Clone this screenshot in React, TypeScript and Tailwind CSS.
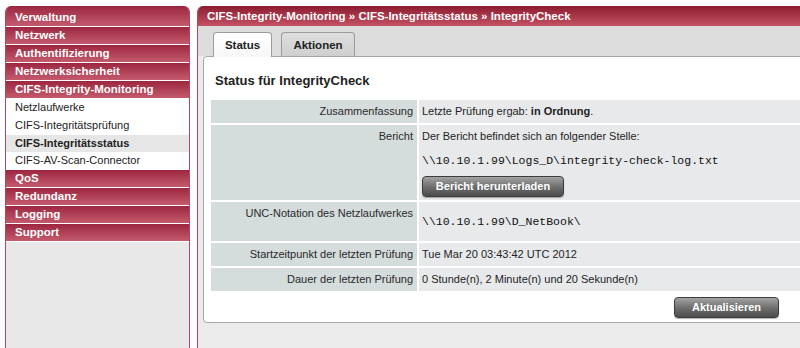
const topItems = ['Verwaltung', 'Netzwerk', 'Authentifizierung', 'Netzwerksicherheit', 'CIFS-Integrity-Monitoring'];
const subItems = ['Netzlaufwerke', 'CIFS-Integritätsprüfung', 'CIFS-Integritätsstatus', 'CIFS-AV-Scan-Connector'];
const bottomItems = ['QoS', 'Redundanz', 'Logging', 'Support'];

function NavBar({ label, first }: { label: string; first?: boolean }) {
  return (
    <div
      className={`${first ? 'h-[21px] pt-[3px]' : 'h-[18px]'} border-b border-white bg-linear-to-b from-[#9c2540] to-[#c45a6e] pl-[9px] text-[11.5px] leading-[17px] font-bold text-white`}
    >
      {label}
    </div>
  );
}

function Sidebar() {
  return (
    <div className="flex h-[400px] w-[185px] shrink-0 flex-col overflow-hidden rounded-t-[6px] border-x border-[#b5485c] bg-[#e8e8e8]">
      {topItems.map((item, i) => (
        <NavBar key={item} label={item} first={i === 0} />
      ))}
      <div className="bg-white">
        {subItems.map((item) => (
          <div
            key={item}
            className={`h-[17.75px] pl-[9px] text-[11px] leading-[17.75px] text-[#222] ${
              item === 'CIFS-Integritätsstatus' ? 'bg-[#e6e6e6] font-bold' : ''
            }`}
          >
            {item}
          </div>
        ))}
      </div>
      {bottomItems.map((item) => (
        <NavBar key={item} label={item} />
      ))}
    </div>
  );
}

function GrayButton({ label, width }: { label: string; width: string }) {
  return (
    <button
      className={`${width} h-[21px] rounded-[4px] border border-[#3c3c3c] bg-linear-to-b from-[#a4a4a4] via-[#707070] to-[#4c4c4c] text-[11px] font-bold text-white shadow-[0_1px_1px_rgba(0,0,0,0.3)]`}
    >
      {label}
    </button>
  );
}

function Row({ label, children, tall }: { label: string; children: React.ReactNode; tall?: boolean }) {
  return (
    <>
      <div className="bg-[#d5dcdc] px-[4px] py-[4px] text-right leading-[15px] text-[#2a2a2a]">{label}</div>
      <div className={`bg-[#e7e9eb] px-[3px] py-[4px] leading-[15px] text-[#1e1e1e] ${tall ? 'flex items-center' : ''}`}>
        {children}
      </div>
    </>
  );
}

const mono = "font-['Liberation_Mono','Courier_New',monospace] text-[11.5px] text-[#111]";

export default function App() {
  return (
    <div className="h-[348px] w-[800px] overflow-hidden bg-white font-['Liberation_Sans',Arial,sans-serif]">
      <div className="flex h-full w-[820px] pt-[6px] pl-[5px]">
        <Sidebar />
        <div className="ml-[7px] flex flex-1 flex-col overflow-hidden rounded-t-[6px] border-x border-[#b5485c] bg-[#ebebeb]">
          <div className="h-[20px] bg-linear-to-b from-[#8c1b30] to-[#c45064] pl-[9px] text-[11.5px] leading-[20px] font-bold text-white">
            CIFS-Integrity-Monitoring » CIFS-Integritätsstatus » IntegrityCheck
          </div>
          <div className="flex h-[30px] items-end gap-[9px] bg-[#dcdcdc] pl-[15px]">
            <div className="relative z-10 mb-[-1px] h-[25px] w-[59px] rounded-t-[4px] border border-b-0 border-[#9c9c9c] bg-linear-to-b from-[#ffffff] to-[#f7f7f7] text-center text-[11.5px] leading-[24px] font-bold text-[#222]">
              Status
            </div>
            <div className="h-[24px] w-[74px] rounded-t-[4px] border border-b-0 border-[#9c9c9c] bg-linear-to-b from-[#dedede] to-[#cfcfcf] text-center text-[11.5px] leading-[24px] font-bold text-[#222]">
              Aktionen
            </div>
          </div>
          <div className="mx-[5px] h-[267px] rounded-b-[4px] rounded-tl-[4px] border border-[#a6a6a6] bg-white pt-[16px] pb-[3px]">
            <div className="pl-[11px] text-[13px] leading-[16px] font-bold text-[#222]">Status für IntegrityCheck</div>
            <div className="mx-[7px] mt-[11px] grid grid-cols-[206px_1fr] gap-[2px] text-[11px]">
              <Row label="Zusammenfassung">
                Letzte Prüfung ergab: <b>in Ordnung</b>.
              </Row>
              <Row label="Bericht">
                <div>Der Bericht befindet sich an folgender Stelle:</div>
                <div className={`mt-[9px] leading-[15px] ${mono}`}>\\10.10.1.99\Logs_D\integrity-check-log.txt</div>
                <div className="mt-[8px] mb-[-1px]">
                  <GrayButton label="Bericht herunterladen" width="w-[142px]" />
                </div>
              </Row>
              <Row label="UNC-Notation des Netzlaufwerkes" tall>
                <div className={`my-[8px] leading-[15px] ${mono}`}>\\10.10.1.99\D_NetBook\</div>
              </Row>
              <Row label="Startzeitpunkt der letzten Prüfung">Tue Mar 20 03:43:42 UTC 2012</Row>
              <Row label="Dauer der letzten Prüfung">0 Stunde(n), 2 Minute(n) und 20 Sekunde(n)</Row>
            </div>
            <div className="mt-[6px] flex justify-end pr-[34px]">
              <GrayButton label="Aktualisieren" width="w-[105px]" />
            </div>
          </div>
        </div>
      </div>
    </div>
  );
}
